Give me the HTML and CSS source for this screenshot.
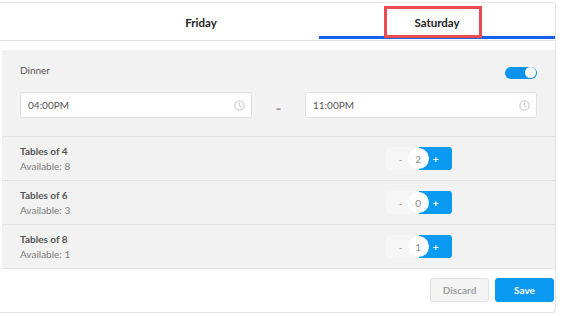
FILE: index.html
```html
<!DOCTYPE html>
<html lang="en">

<head>
    <meta charset="UTF-8">
    <meta name="viewport" content="width=device-width, initial-scale=1.0">
    <title>Schedule</title>

    <link rel="stylesheet" href="styles.css">
</head>

<body>
    <main class="card">
        <nav class="tabs">
            <div class="tab">Friday</div>
            <div class="tab active">Saturday</div>
        </nav>
        <div class="highlight"></div>

        <section class="panel">
            <div class="shift">
                <div class="shift-head">
                    <span class="shift-name">Dinner</span>
                    <span class="toggle"><span class="knob"></span></span>
                </div>
                <div class="times">
                    <div class="time-input">
                        <span>04:00PM</span>
                        <svg class="clock" width="11" height="11" viewBox="0 0 12 12">
                            <circle cx="6" cy="6" r="5" fill="none" stroke="#d2d2d2" stroke-width="1.4" />
                            <path d="M6 3.2V6.2L8 7.6" fill="none" stroke="#d2d2d2" stroke-width="1.4" stroke-linecap="round" />
                        </svg>
                    </div>
                    <div class="dash">-</div>
                    <div class="time-input">
                        <span>11:00PM</span>
                        <svg class="clock" width="11" height="11" viewBox="0 0 12 12">
                            <circle cx="6" cy="6" r="5" fill="none" stroke="#d2d2d2" stroke-width="1.4" />
                            <path d="M6 3.2V6.2L8 7.6" fill="none" stroke="#d2d2d2" stroke-width="1.4" stroke-linecap="round" />
                        </svg>
                    </div>
                </div>
            </div>

            <div class="row">
                <div class="info">
                    <div class="title">Tables of 4</div>
                    <div class="avail">Available: 8</div>
                </div>
                <div class="stepper">
                    <span class="minus">-</span>
                    <span class="count">2</span>
                    <span class="plus">+</span>
                </div>
            </div>

            <div class="row">
                <div class="info">
                    <div class="title">Tables of 6</div>
                    <div class="avail">Available: 3</div>
                </div>
                <div class="stepper">
                    <span class="minus">-</span>
                    <span class="count">0</span>
                    <span class="plus">+</span>
                </div>
            </div>

            <div class="row">
                <div class="info">
                    <div class="title">Tables of 8</div>
                    <div class="avail">Available: 1</div>
                </div>
                <div class="stepper">
                    <span class="minus">-</span>
                    <span class="count">1</span>
                    <span class="plus">+</span>
                </div>
            </div>
        </section>

        <footer class="actions">
            <button class="btn discard">Discard</button>
            <button class="btn save">Save</button>
        </footer>
    </main>
</body>

</html>
```

FILE: styles.css
```css
body {
    margin: 0;
    background: #fff;
    font-family: Lato, "Open Sans", sans-serif;
    color: #555;
}

.card {
    position: relative;
    margin-top: 2px;
    width: 556px;
    border-top: 1px solid #e4e4e4;
    border-right: 1px solid #e4e4e4;
    border-bottom: 1px solid #e4e4e4;
    border-radius: 0 4px 4px 0;
    box-sizing: border-box;
}

.tabs {
    display: flex;
    justify-content: flex-end;
    border-bottom: 1px solid #e0e0e0;
    padding-bottom: 1px;
}

.tab {
    width: 236px;
    height: 36px;
    box-sizing: border-box;
    padding-top: 13px;
    text-align: center;
    font-size: 11.5px;
    font-weight: 700;
    color: #222;
}

.tab.active {
    border-bottom: 3px solid #1460e8;
}

.highlight {
    position: absolute;
    left: 384px;
    top: 3px;
    width: 98px;
    height: 32px;
    box-sizing: border-box;
    border: 3px solid #ea4a50;
}

.panel {
    margin: 9px 0 0 2px;
    background: #f2f2f2;
    border-bottom: 1px solid #e2e2e2;
}

.shift {
    padding: 13px 18px 18px 18px;
    border-bottom: 1px solid #e2e2e2;
}

.shift-head {
    display: flex;
    justify-content: space-between;
    align-items: center;
    height: 14px;
}

.shift-name {
    font-size: 10px;
    color: #555;
}

.toggle {
    display: flex;
    justify-content: flex-end;
    align-items: center;
    width: 32px;
    height: 12px;
    border-radius: 6px;
    background: #0a94f0;
    margin-top: 5px;
}

.knob {
    width: 11px;
    height: 11px;
    border-radius: 50%;
    background: #fff;
    margin-right: 1px;
}

.times {
    display: grid;
    grid-template-columns: 1fr 53px 1fr;
    margin-top: 15px;
}

.time-input {
    display: flex;
    justify-content: space-between;
    align-items: center;
    height: 24px;
    padding: 0 6px 0 7px;
    background: #fff;
    border: 1px solid #e2e2e2;
    border-radius: 3px;
    font-size: 10px;
    color: #555;
}

.dash {
    text-align: center;
    padding-top: 6px;
    font-size: 16px;
    font-weight: 700;
    color: #999;
}

.row {
    display: grid;
    grid-template-columns: 1fr 1fr;
    align-items: center;
    height: 43px;
    padding: 0 18px;
    border-bottom: 1px solid #e2e2e2;
}

.row:last-child {
    border-bottom: none;
}

.title {
    font-size: 10px;
    font-weight: 700;
    color: #555;
}

.avail {
    margin-top: 3px;
    font-size: 10px;
    color: #7a7a7a;
}

.stepper {
    position: relative;
    justify-self: center;
    display: flex;
    height: 23px;
    margin-left: 22px;
    font-size: 10px;
}

.minus,
.plus {
    display: flex;
    align-items: center;
    width: 33px;
    box-sizing: border-box;
}

.minus {
    padding-left: 13px;
    background: #f6f6f6;
    color: #999;
    border-radius: 3px 0 0 3px;
}

.plus {
    padding-left: 14px;
    background: #0a9af2;
    color: #fff;
    font-weight: 700;
    border-radius: 0 3px 3px 0;
}

.count {
    position: absolute;
    left: 22px;
    top: 1px;
    width: 21px;
    height: 21px;
    border-radius: 50%;
    background: #fff;
    color: #888;
    display: flex;
    justify-content: center;
    align-items: center;
}

.actions {
    display: flex;
    justify-content: flex-end;
    gap: 6px;
    padding: 9px 1px 10px 0;
}

.btn {
    width: 59px;
    height: 24px;
    border-radius: 3px;
    font-family: Lato, "Open Sans", sans-serif;
    font-size: 10px;
    font-weight: 700;
    cursor: pointer;
}

.discard {
    background: #f4f4f4;
    border: 1px solid #e2e2e2;
    color: #a0a0a0;
}

.save {
    background: #0a9af2;
    border: 1px solid #0a9af2;
    color: #fff;
}
```
